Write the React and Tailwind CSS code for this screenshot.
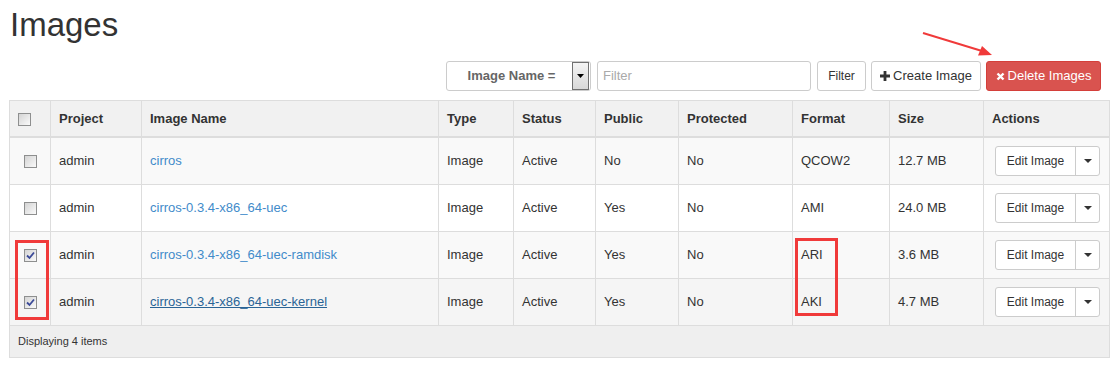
import React from "react";

const rows = [
  { name: "cirros", pub: "No", fmt: "QCOW2", size: "12.7 MB", checked: false, bg: "bg-[#f9f9f9]", hover: false },
  { name: "cirros-0.3.4-x86_64-uec", pub: "Yes", fmt: "AMI", size: "24.0 MB", checked: false, bg: "bg-white", hover: false },
  { name: "cirros-0.3.4-x86_64-uec-ramdisk", pub: "Yes", fmt: "ARI", size: "3.6 MB", checked: true, bg: "bg-[#f9f9f9]", hover: false },
  { name: "cirros-0.3.4-x86_64-uec-kernel", pub: "Yes", fmt: "AKI", size: "4.7 MB", checked: true, bg: "bg-[#f5f5f5]", hover: true },
];

function Check({ checked }) {
  return (
    <span className="inline-flex w-[13px] h-[13px] border border-[#8e8f8f] bg-gradient-to-br from-[#d4d4d4] to-[#fafafa] items-center justify-center align-middle">
      {checked && (
        <svg width="9" height="9" viewBox="0 0 9 9">
          <path d="M1 4.5 L3.5 7 L8 1.5" fill="none" stroke="#3b4a98" strokeWidth="1.8" />
        </svg>
      )}
    </span>
  );
}

export default function App() {
  const th = "border border-[#ddd] border-b-2 px-2 pt-[9px] pb-2 text-left font-bold text-[13px] leading-[18px] bg-[#f1f1f1] align-middle";
  const td = "border border-[#ddd] px-2 py-2 text-[13px] leading-[18px] align-middle";
  return (
    <div className="relative w-[1114px] h-[365px] overflow-hidden bg-white text-[#333] font-['Liberation_Sans',Arial,sans-serif]">
      <h1 className="pl-[10px] pt-[5px] text-[33px] leading-[40px] font-normal">Images</h1>

      <div className="mt-[16px] flex justify-end pr-[13px] h-[30px]">
        <div className="w-[145px] h-[30px] flex items-center border border-[#ccc] rounded-[3px] bg-white">
          <span className="flex-1 text-center text-[13px] font-bold text-[#666] pl-1">Image Name =</span>
          <span className="w-[17px] h-[28px] mr-[1px] border border-[#707070] bg-gradient-to-b from-[#f4f4f4] to-[#d8d8d8] flex items-center justify-center">
            <svg width="7" height="4" viewBox="0 0 7 4"><path d="M0 0 H7 L3.5 4 Z" fill="#000" /></svg>
          </span>
        </div>
        <div className="ml-[6px] w-[214px] h-[30px] border border-[#ccc] rounded-[3px] flex items-center px-[5px] text-[13px] text-[#aaa]">Filter</div>
        <button className="ml-[6px] w-[49px] h-[30px] border border-[#ccc] rounded-[3px] bg-white text-[12px] text-[#333]">Filter</button>
        <button className="ml-[5px] w-[110px] h-[30px] border border-[#ccc] rounded-[3px] bg-white text-[13px] text-[#333] flex items-center justify-center gap-[3px]">
          <svg width="10" height="10" viewBox="0 0 10 10"><path d="M3.6 0 H6.4 V3.6 H10 V6.4 H6.4 V10 H3.6 V6.4 H0 V3.6 H3.6 Z" fill="#333" /></svg>
          Create Image
        </button>
        <button className="ml-[5px] w-[115px] h-[30px] border border-[#d43f3a] rounded-[3px] bg-[#d9534f] text-[13px] text-white flex items-center justify-center gap-[3px]">
          <svg width="9" height="9" viewBox="0 0 9 9"><path d="M1.5 1.5 L7.5 7.5 M7.5 1.5 L1.5 7.5" stroke="#fff" strokeWidth="2.4" /></svg>
          Delete Images
        </button>
      </div>

      <div className="mt-[9px] ml-[9px] w-[1100px]">
        <table className="w-[1100px] table-fixed border-collapse border border-[#ddd]">
          <colgroup>
            <col className="w-[41px]" />
            <col className="w-[91px]" />
            <col className="w-[297px]" />
            <col className="w-[75px]" />
            <col className="w-[82px]" />
            <col className="w-[83px]" />
            <col className="w-[114px]" />
            <col className="w-[97px]" />
            <col className="w-[94px]" />
            <col className="w-[126px]" />
          </colgroup>
          <thead>
            <tr>
              <th className={th + " text-center"}><Check checked={false} /></th>
              <th className={th}>Project</th>
              <th className={th}>Image Name</th>
              <th className={th}>Type</th>
              <th className={th}>Status</th>
              <th className={th}>Public</th>
              <th className={th}>Protected</th>
              <th className={th}>Format</th>
              <th className={th}>Size</th>
              <th className={th}>Actions</th>
            </tr>
          </thead>
          <tbody>
            {rows.map((r) => (
              <tr key={r.name} className={r.bg}>
                <td className={td + " text-center"}><Check checked={r.checked} /></td>
                <td className={td}>admin</td>
                <td className={td}>
                  <span className={r.hover ? "text-[#2a6496] underline" : "text-[#428bca]"}>{r.name}</span>
                </td>
                <td className={td}>Image</td>
                <td className={td}>Active</td>
                <td className={td}>{r.pub}</td>
                <td className={td}>No</td>
                <td className={td}>{r.fmt}</td>
                <td className={td}>{r.size}</td>
                <td className={td + " pl-[11px]"}>
                  <div className="flex h-[30px] w-[105px] border border-[#ccc] rounded-[3px] bg-white">
                    <span className="w-[80px] flex items-center justify-center text-[12px] text-[#333] border-r border-[#ccc]">Edit Image</span>
                    <span className="flex-1 flex items-center justify-center">
                      <svg width="8" height="4" viewBox="0 0 8 4"><path d="M0 0 H8 L4 4 Z" fill="#333" /></svg>
                    </span>
                  </div>
                </td>
              </tr>
            ))}
            <tr className="bg-[#efefef]">
              <td colSpan={10} className="border border-[#ddd] px-2 py-2 text-[11px] leading-[15px]">Displaying 4 items</td>
            </tr>
          </tbody>
        </table>
      </div>

      {/* annotations */}
      <div className="absolute left-[15px] top-[240px] w-[34px] h-[80px] border-[3px] border-[#f03a3a]" />
      <div className="absolute left-[795px] top-[238px] w-[43px] h-[78px] border-[3px] border-[#f03a3a]" />
      <svg className="absolute left-0 top-0" width="1114" height="365" style={{ pointerEvents: "none" }}>
        <line x1="923" y1="33" x2="982" y2="51" stroke="#f03a3a" strokeWidth="2" />
        <path d="M992 55 L978 55.5 L982 46 Z" fill="#f03a3a" />
      </svg>
    </div>
  );
}
